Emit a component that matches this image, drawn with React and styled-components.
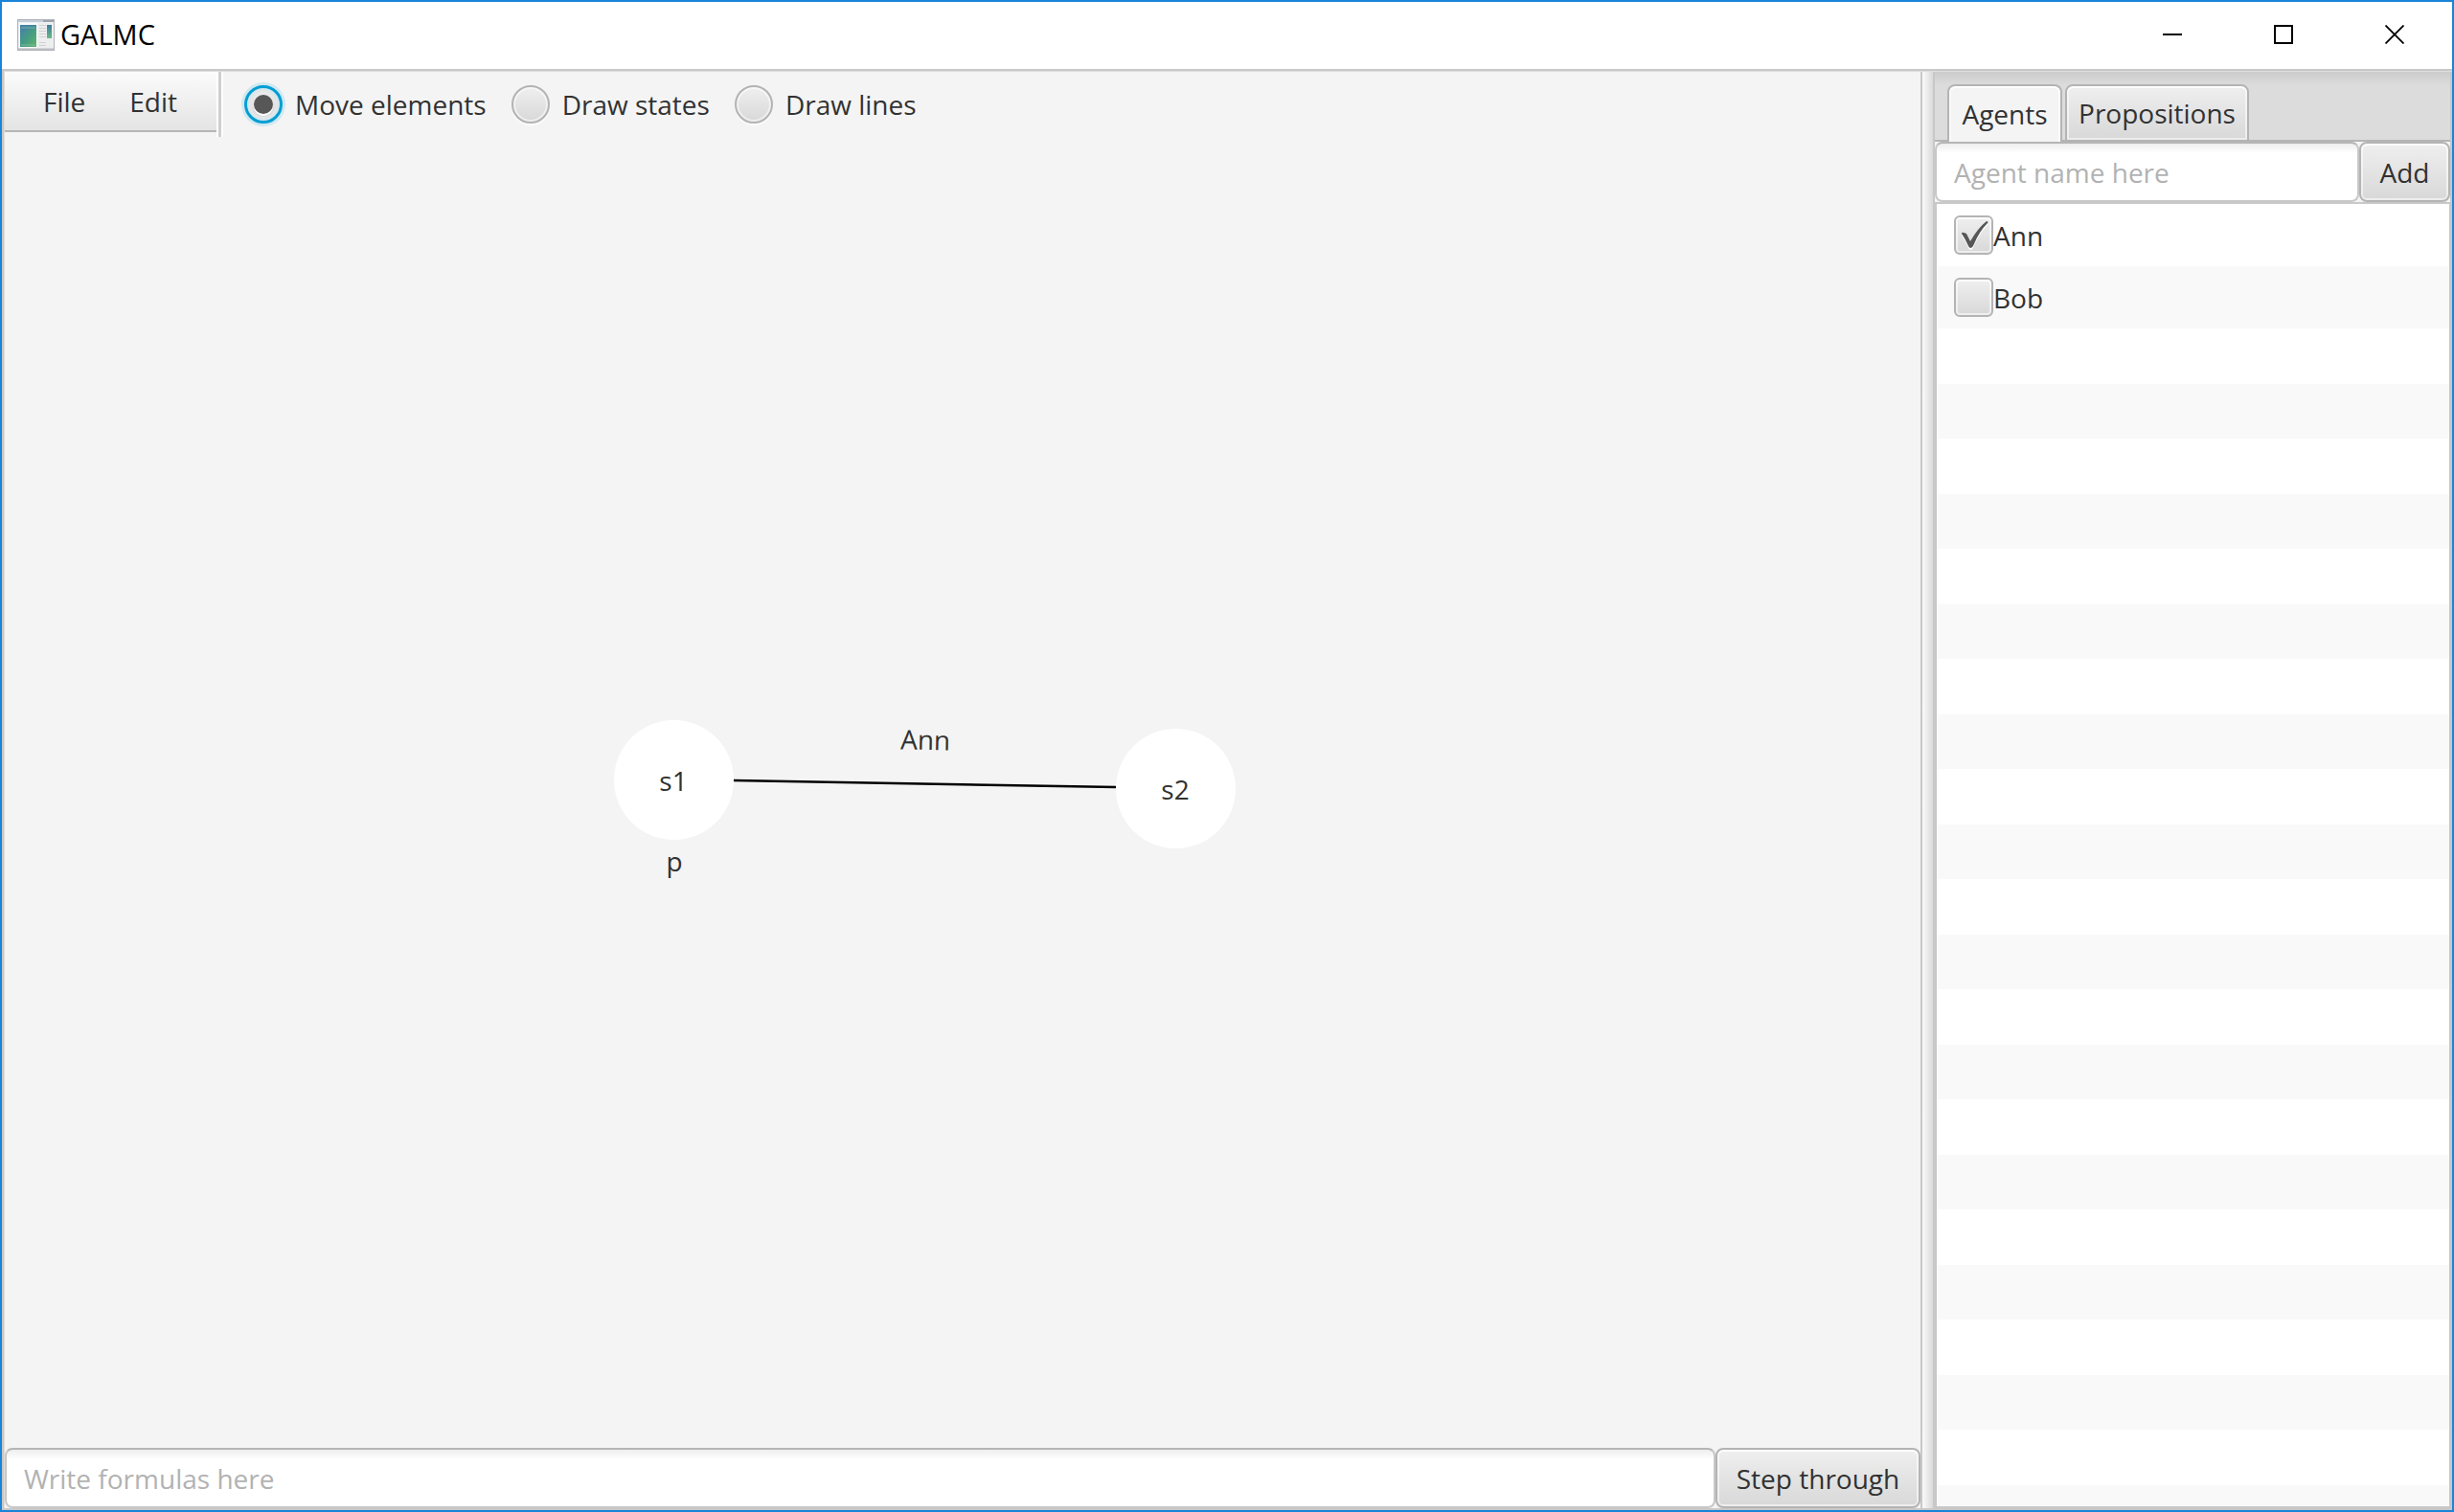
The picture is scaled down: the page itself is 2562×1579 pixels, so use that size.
import React, { useState } from "react";
import styled, { createGlobalStyle, css } from "styled-components";

const GlobalStyle = createGlobalStyle`
  *, *::before, *::after { box-sizing: border-box; }
  html, body, #root { height: 100%; margin: 0; }
  body, button, input {
    font-family: "Open Sans", "Noto Sans", sans-serif;
    font-size: 28px;
    line-height: 40px;
    color: #323232;
  }
`;

const raised = css`
  border: 2px solid #b4b4b4;
  border-radius: 8px;
  background: linear-gradient(#efefef, #d8d8d8);
  box-shadow: inset 0 2px 0 #fdfdfd, inset 0 0 0 2px rgba(255, 255, 255, 0.55);
`;

const Window = styled.div`
  display: grid;
  grid-template-rows: 70px minmax(0, 1fr);
  height: 100%;
  border: 2px solid #1a84d9;
  background: #fff;
`;

const TitleBar = styled.header`
  display: flex;
  align-items: center;
  padding: 0 2px 2px 16px;
`;

const AppIcon = styled.svg`
  width: 39px;
  height: 33px;
  margin-right: 6px;
`;

const Title = styled.h1`
  flex: 1;
  margin: 0;
  font-size: 29px;
  font-weight: 400;
  line-height: 40px;
  color: #000;
`;

const CaptionButton = styled.button`
  display: grid;
  place-items: center;
  width: 116px;
  height: 68px;
  padding: 0;
  border: 0;
  background: none;
`;

const SplitPane = styled.div`
  display: grid;
  grid-template-columns: minmax(0, 1fr) 15px 540px;
  min-height: 0;
  border: 2px solid #c8c8c8;
  border-right-width: 0;
  box-shadow: inset 1px 1px 0 #dedede;
  padding: 1px 0 0 1px;
  background: #f4f4f4;
`;

const Editor = styled.main`
  display: grid;
  grid-template-rows: 68px minmax(0, 1fr) 63px;
  min-width: 0;
`;

const Divider = styled.div`
  border: solid #c8c8c8;
  border-width: 0 2px;
  background: linear-gradient(90deg, #fafafa, #dadada);
`;

const Toolbar = styled.div`
  display: flex;
  align-items: flex-start;
`;

const MenuBar = styled.nav`
  display: flex;
  width: 221px;
  height: 63px;
  padding-left: 17px;
  border-bottom: 2px solid #b5b5b5;
  background: linear-gradient(#fbfbfb, #e4e4e4);
`;

const MenuButton = styled.button`
  padding: 10px 23px;
  border: 0;
  background: none;
`;

const Separator = styled.div`
  width: 7px;
  height: 68px;
  margin-right: 22px;
  border: solid #fff;
  border-width: 0 2px;
  background: #cfcfcf;
`;

const ModeGroup = styled.div`
  display: flex;
  gap: 26px;
  padding-top: 14px;
`;

const ModeLabel = styled.label`
  display: flex;
  align-items: center;
  gap: 13px;
`;

const Radio = styled.input`
  appearance: none;
  display: grid;
  place-items: center;
  width: 40px;
  height: 40px;
  margin: 0;
  border: 2px solid #b4b4b4;
  border-radius: 50%;
  background: linear-gradient(#efefef, #d8d8d8);
  box-shadow: inset 0 0 0 2px rgba(255, 255, 255, 0.55), 0 2px 0 #fcfcfc;
  &:checked {
    border: 3px solid #039ed3;
    box-shadow: 0 0 0 3px #cfe8f0, inset 0 0 0 2px #d3e8ef, inset 0 0 0 4px #e6e6e6;
  }
  &:checked::after {
    content: "";
    width: 20px;
    height: 20px;
    border-radius: 50%;
    background: #575757;
    box-shadow: 0 2px 0 #fff;
  }
`;

const Canvas = styled.svg`
  display: block;
  width: 100%;
  height: 100%;
  text {
    font-size: 28px;
    fill: #323232;
    text-anchor: middle;
  }
`;

const FieldRow = styled.form`
  display: flex;
  align-items: stretch;
  height: 63px;
`;

const TextField = styled.input`
  flex: 1;
  min-width: 0;
  padding: 0 18px;
  border: 2px solid #c8c8c8;
  border-top-color: #b5b5b5;
  border-radius: 8px;
  background: linear-gradient(#eeeeee, #fff 10px);
  &::placeholder { color: #b2b2b2; opacity: 1; }
`;

const PushButton = styled.button`
  ${raised}
  width: ${(p) => p.$width}px;
  padding: 0;
`;

const SidePanel = styled.aside`
  display: grid;
  grid-template-rows: 73px 63px minmax(0, 1fr);
  min-height: 0;
  padding-right: 2px;
  background: linear-gradient(#c8c8c8, #c8c8c8) right / 2px 100% no-repeat;
`;

const TabHeader = styled.div`
  display: flex;
  align-items: flex-end;
  gap: 3px;
  padding-left: 13px;
  background: linear-gradient(#b5b5b5, #b5b5b5) bottom / 100% 2px no-repeat,
    linear-gradient(#cccccc, #dcdcdc 14px);
`;

const Tab = styled.button`
  ${raised}
  width: ${(p) => p.$width}px;
  height: 60px;
  padding: 0;
  border-radius: 8px 8px 0 0;
  ${(p) =>
    p.$active &&
    css`
      border-bottom: 0;
      background: #f4f4f4;
      box-shadow: inset 0 2px 0 #fff, inset 2px 0 0 #fafafa, inset -2px 0 0 #fafafa;
    `}
`;

const AgentList = styled.ul`
  margin: 0;
  padding: 0;
  list-style: none;
  display: flex;
  flex-direction: column;
  min-height: 0;
  border: 2px solid #c8c8c8;
  border-right-width: 1px;
`;

const AgentRow = styled.li`
  flex: none;
  height: 65px;
  padding: 12px 18px;
  background: ${(p) => (p.$odd ? "#f9f9f9" : "#fff")};
`;

const AgentLabel = styled.label`
  display: grid;
  grid-template-columns: 41px 1fr;
  align-items: center;
`;

const CheckBox = styled.input`
  ${raised}
  appearance: none;
  grid-area: 1 / 1;
  width: 41px;
  height: 41px;
  margin: 0;
  border-radius: 6px;
  & + svg { visibility: hidden; }
  &:checked + svg { visibility: visible; }
`;

const CheckMark = styled.svg`
  grid-area: 1 / 1;
  width: 41px;
  height: 41px;
  pointer-events: none;
`;

const EmptyRows = styled.li`
  flex: 1;
  background: repeating-linear-gradient(#fff 0 58px, #f9f9f9 58px 115px);
`;

const MODES = ["Move elements", "Draw states", "Draw lines"];

const TICK = "M8 19q0-2 2-1q3 0 4 3l3 6q8-14 17-21q2 0 1 2Q26 17 20 32q-3 4-5 0Q12 25 8 19z";

function WindowIcon() {
  return (
    <AppIcon viewBox="0 0 39 33" aria-hidden="true">
      <defs>
        <linearGradient id="screen" x1="0" y1="0" x2="1" y2="1">
          <stop offset="0" stopColor="#477fa6" />
          <stop offset="0.5" stopColor="#459a85" />
          <stop offset="1" stopColor="#62b567" />
        </linearGradient>
        <linearGradient id="bar" x1="0" y1="0" x2="0" y2="1">
          <stop offset="0" stopColor="#3d7c9a" />
          <stop offset="1" stopColor="#69b987" />
        </linearGradient>
      </defs>
      <rect x="0.5" y="0.5" width="38" height="32" fill="#eceef0" stroke="#b0b3b9" />
      <path d="M1 2h37" stroke="#c3cdd8" strokeWidth="2" />
      <path d="M27 2h11" stroke="#9da4ab" strokeWidth="2" />
      <rect x="2" y="4" width="19" height="26" fill="#f9fbfc" />
      <rect x="3" y="6" width="17" height="23" fill="url(#screen)" />
      <path d="M3 15Q10 9 20 10V6H3z" fill="#4582aa" opacity="0.5" />
      <path d="M4 9h15M4 27h15" stroke="#8ac2b6" opacity="0.7" />
      <path d="M23 6.500h7M23 9.500h7M23 12.500h7M23 15.500h7M23 18.500h7M23 24.500h7M23 27.500h7" stroke="#cfd1d3" />
      <rect x="31" y="6" width="5" height="14" fill="url(#bar)" />
      <path d="M1 31.500h37" stroke="#b8bbc0" strokeWidth="2" />
    </AppIcon>
  );
}

function ModelGraph() {
  return (
    <Canvas role="img" aria-label="Model graph">
      <line x1="761" y1="672" x2="1160" y2="679" stroke="#000" strokeWidth="2.5" />
      <circle cx="698.500" cy="671.500" r="62.500" fill="#fff" />
      <circle cx="1222.500" cy="680.500" r="62.500" fill="#fff" />
      <text x="698" y="683">s1</text>
      <text x="1222" y="692">s2</text>
      <text x="699" y="767">p</text>
      <text x="961" y="640" transform="rotate(1 961 640)">Ann</text>
    </Canvas>
  );
}

export default function App() {
  const [mode, setMode] = useState(MODES[0]);
  const [agents, setAgents] = useState([
    { name: "Ann", on: true },
    { name: "Bob", on: false },
  ]);
  const toggle = (name) =>
    setAgents(agents.map((a) => (a.name === name ? { ...a, on: !a.on } : a)));

  return (
    <Window>
      <GlobalStyle />
      <TitleBar>
        <WindowIcon />
        <Title>GALMC</Title>
        <CaptionButton aria-label="Minimize">
          <svg width="20" height="20"><path d="M0 10h20" stroke="#000" strokeWidth="2" /></svg>
        </CaptionButton>
        <CaptionButton aria-label="Maximize">
          <svg width="20" height="20"><rect x="1" y="1" width="18" height="18" fill="none" stroke="#000" strokeWidth="2" /></svg>
        </CaptionButton>
        <CaptionButton aria-label="Close">
          <svg width="20" height="20"><path d="M0.500 0.500l19 19M19.500 0.500l-19 19" stroke="#000" strokeWidth="1.800" /></svg>
        </CaptionButton>
      </TitleBar>
      <SplitPane>
        <Editor>
          <Toolbar>
            <MenuBar>
              <MenuButton>File</MenuButton>
              <MenuButton>Edit</MenuButton>
            </MenuBar>
            <Separator />
            <ModeGroup role="radiogroup" aria-label="Mode">
              {MODES.map((m) => (
                <ModeLabel key={m}>
                  <Radio type="radio" name="mode" checked={mode === m} onChange={() => setMode(m)} />
                  {m}
                </ModeLabel>
              ))}
            </ModeGroup>
          </Toolbar>
          <ModelGraph />
          <FieldRow onSubmit={(e) => e.preventDefault()}>
            <TextField placeholder="Write formulas here" aria-label="Formula" />
            <PushButton $width={214}>Step through</PushButton>
          </FieldRow>
        </Editor>
        <Divider />
        <SidePanel>
          <TabHeader role="tablist">
            <Tab role="tab" aria-selected="true" $active $width={120}>Agents</Tab>
            <Tab role="tab" aria-selected="false" $width={192}>Propositions</Tab>
          </TabHeader>
          <FieldRow onSubmit={(e) => e.preventDefault()}>
            <TextField placeholder="Agent name here" aria-label="Agent name" />
            <PushButton $width={95}>Add</PushButton>
          </FieldRow>
          <AgentList>
            {agents.map((a, i) => (
              <AgentRow key={a.name} $odd={i % 2 === 1}>
                <AgentLabel>
                  <CheckBox type="checkbox" checked={a.on} onChange={() => toggle(a.name)} />
                  <CheckMark viewBox="0 0 41 41" aria-hidden="true">
                    <path d={TICK} fill="#fff" transform="translate(0 2)" />
                    <path d={TICK} fill="#575757" />
                  </CheckMark>
                  {a.name}
                </AgentLabel>
              </AgentRow>
            ))}
            <EmptyRows aria-hidden="true" />
          </AgentList>
        </SidePanel>
      </SplitPane>
    </Window>
  );
}
